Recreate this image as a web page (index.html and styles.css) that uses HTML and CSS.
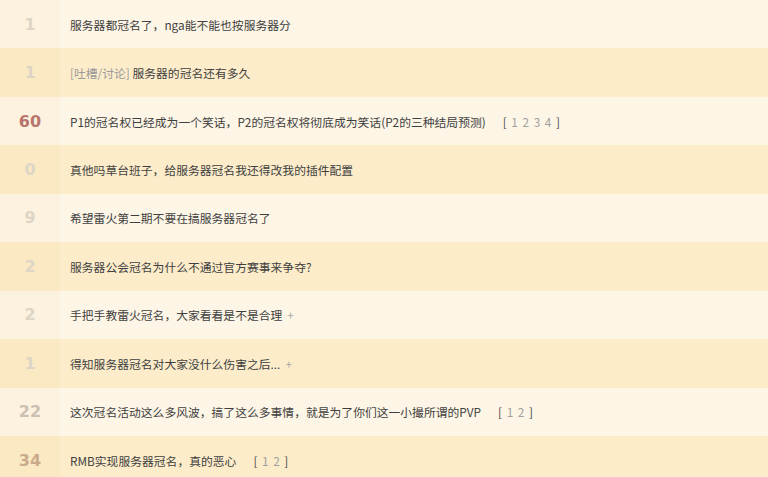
FILE: index.html
```html
<!DOCTYPE html>
<html lang="zh-CN">
<head>
<meta charset="utf-8">
<link rel="stylesheet" href="styles.css">
</head>
<body>
<div class="list">
  <div class="row light"><div class="cnt c-low">1</div><div class="title">服务器都冠名了，nga能不能也按服务器分</div></div>
  <div class="row dark"><div class="cnt c-low">1</div><div class="title"><span class="tag">[吐槽/讨论]</span> 服务器的冠名还有多久</div></div>
  <div class="row light"><div class="cnt c-hot">60</div><div class="title">P1的冠名权已经成为一个笑话，P2的冠名权将彻底成为笑话(P2的三种结局预测)<span class="pages"><b>[</b><i>1</i><i>2</i><i>3</i><i>4</i><b>]</b></span></div></div>
  <div class="row dark"><div class="cnt c-low">0</div><div class="title">真他吗草台班子，给服务器冠名我还得改我的插件配置</div></div>
  <div class="row light"><div class="cnt c-low">9</div><div class="title">希望雷火第二期不要在搞服务器冠名了</div></div>
  <div class="row dark"><div class="cnt c-low">2</div><div class="title">服务器公会冠名为什么不通过官方赛事来争夺?</div></div>
  <div class="row light"><div class="cnt c-low">2</div><div class="title">手把手教雷火冠名，大家看看是不是合理<span class="plus">+</span></div></div>
  <div class="row dark"><div class="cnt c-low">1</div><div class="title">得知服务器冠名对大家没什么伤害之后...<span class="plus">+</span></div></div>
  <div class="row light"><div class="cnt c-mid">22</div><div class="title">这次冠名活动这么多风波，搞了这么多事情，就是为了你们这一小撮所谓的PVP<span class="pages"><b>[</b><i>1</i><i>2</i><b>]</b></span></div></div>
  <div class="row dark"><div class="cnt c-warm">34</div><div class="title">RMB实现服务器冠名，真的恶心<span class="pages"><b>[</b><i>1</i><i>2</i><b>]</b></span></div></div>
</div>
</body>
</html>
```
FILE: styles.css
```css
html, body {
  margin: 0;
  padding: 0;
  background: #fdf5e4;
  overflow: hidden;
}
.list {
  display: flex;
  flex-direction: column;
}
.row {
  display: flex;
  align-items: stretch;
  height: 48.44px;
  flex: none;
}
.row.light { background: #fdf5e5; }
.row.dark { background: #fcecca; }
.row.light .cnt { background: #fcf2df; }
.row.dark .cnt { background: #fbe9c3; }
.cnt {
  width: 60px;
  flex: none;
  display: flex;
  align-items: center;
  justify-content: center;
  font-family: "DejaVu Sans", Verdana, sans-serif;
  font-weight: bold;
  font-size: 16px;
}
.c-low { color: #ddd5c6; }
.c-hot { color: #b7756c; }
.c-mid { color: #cdbfb1; }
.c-warm { color: #c9ab8c; }
.title {
  display: flex;
  align-items: center;
  padding-left: 10px;
  font-family: "Noto Sans CJK SC", "Noto Sans", sans-serif;
  font-size: 11.8px;
  color: #3f3f3f;
  white-space: pre;
}
.tag { color: #9a9a9a; }
.pages {
  display: inline-flex;
  gap: 4.6px;
  margin-left: 17px;
}
.pages b {
  font-weight: normal;
  color: #4a4a4a;
}
.pages i {
  font-style: normal;
  color: #a0a0a0;
}
.plus {
  margin-left: 5px;
  color: #a8a8a8;
}
```
